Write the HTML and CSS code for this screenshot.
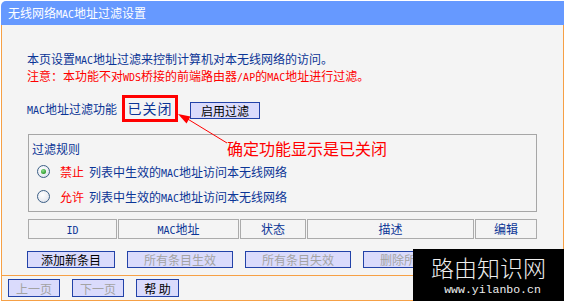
FILE: index.html
```html
<!DOCTYPE html>
<html lang="zh-CN">
<head>
  <meta charset="UTF-8" />
  <title>无线网络MAC地址过滤设置</title>
  <link rel="stylesheet" href="styles.css">
</head>
<body>
  <div class="page">
    <div class="title-bar">无线网络<span class="en">MAC</span>地址过滤设置</div>

    <div class="main">
      <p class="intro">本页设置<span class="en">MAC</span>地址过滤来控制计算机对本无线网络的访问。</p>
      <p class="note">注意：本功能不对<span class="en">WDS</span>桥接的前端路由器<span class="en">/AP</span>的<span class="en">MAC</span>地址进行过滤。</p>

      <div class="mac-row">
        <span class="label"><span class="en">MAC</span>地址过滤功能</span>
        <span class="state">已关闭</span>
        <button class="btn btn-enable">启用过滤</button>
      </div>

      <div class="rules">
        <div class="rules-title">过滤规则</div>
        <div class="rule">
          <span class="radio checked"></span>
          <span class="rule-key">禁止</span>
          <span class="rule-text">列表中生效的<span class="en">MAC</span>地址访问本无线网络</span>
        </div>
        <div class="rule">
          <span class="radio"></span>
          <span class="rule-key">允许</span>
          <span class="rule-text">列表中生效的<span class="en">MAC</span>地址访问本无线网络</span>
        </div>
      </div>

      <div class="list-head">
        <div class="cell c-id"><span class="en">ID</span></div>
        <div class="cell c-mac"><span class="en">MAC</span>地址</div>
        <div class="cell c-state">状态</div>
        <div class="cell c-desc">描述</div>
        <div class="cell c-edit">编辑</div>
      </div>

      <div class="actions">
        <button class="btn btn-add">添加新条目</button>
        <button class="btn btn-wide" disabled>所有条目生效</button>
        <button class="btn btn-wide" disabled>所有条目失效</button>
        <button class="btn btn-wide" disabled>删除所有条目</button>
      </div>
    </div>

    <div class="footer">
      <button class="btn btn-page" disabled>上一页</button>
      <button class="btn btn-page" disabled>下一页</button>
      <button class="btn btn-help">帮 助</button>
    </div>

    <!-- annotation drawn over the screenshot -->
    <svg class="arrow" width="70" height="45" viewBox="0 0 70 45">
      <line x1="16" y1="13" x2="57" y2="38" stroke="#ff0000" stroke-width="1" />
      <polygon points="8,9 20.5,11.5 16.5,18.5" fill="#ff0000" />
    </svg>
    <div class="callout">确定功能显示是已关闭</div>

    <div class="watermark">
      <div class="wm-name">路由知识网</div>
      <div class="wm-url">www.yilanbo.cn</div>
    </div>
  </div>
</body>
</html>
```

FILE: styles.css
```css
body {
  margin: 0;
  background: #fff;
  font-family: "Noto Sans CJK SC", sans-serif;
  font-size: 12px;
  color: #0b3596;
}
.en {
  font-family: "DejaVu Sans Mono", monospace;
  font-size: 10px;
  line-height: 10px;
}
.page {
  position: relative;
  width: 563px;
  margin: 1px 0 0 1px;
}
.title-bar {
  height: 24px;
  line-height: 24px;
  padding-left: 7px;
  background: #6699ff;
  color: #fff;
  border-top-left-radius: 5px;
}
.main {
  background: #f4f4f4;
  border-left: 1px solid #f6a045;
  border-right: 1px solid #f6a045;
  border-bottom: 1px solid #f6a045;
  padding: 25px 0 7px 25px;
}
.main p {
  margin: 0;
  height: 17px;
  line-height: 17px;
}
.note {
  color: #ff0000;
}
.mac-row {
  display: flex;
  align-items: center;
  height: 27px;
  margin-top: 11px;
}
.state {
  box-sizing: border-box;
  width: 56px;
  height: 27px;
  line-height: 21px;
  margin-left: 5px;
  border: 3px solid #ff0000;
  text-align: center;
  font-size: 14px;
  letter-spacing: 1px;
}
.btn {
  box-sizing: border-box;
  padding: 0;
  font-family: "Noto Sans CJK SC", sans-serif;
  font-size: 12px;
  color: #000;
  background: #dadbfc;
  border: 1px solid #2242a8;
  border-radius: 0;
  line-height: 15px;
}
.btn:disabled {
  color: #a3a3a3;
}
.btn-enable {
  width: 70px;
  height: 17px;
  margin: 3px 0 0 12px;
}
.rules {
  box-sizing: border-box;
  width: 509px;
  height: 78px;
  margin: 12px 0 0 1px;
  padding: 5px 3px 0;
  border: 1px solid #a6a6a6;
}
.rules-title {
  height: 17px;
  line-height: 17px;
}
.rules-title + .rule {
  margin-top: 2px;
}
.rule {
  display: flex;
  align-items: center;
  height: 25px;
}
.radio {
  box-sizing: border-box;
  width: 13px;
  height: 13px;
  margin: 0 10px 0 5px;
  border: 1px solid #3c5f86;
  border-radius: 50%;
  background: radial-gradient(circle at 40% 35%, #fff 0%, #e9ecf2 60%, #c9d0dc 100%);
  display: flex;
  align-items: center;
  justify-content: center;
}
.radio.checked::after {
  content: "";
  width: 5px;
  height: 5px;
  border-radius: 50%;
  background: radial-gradient(circle at 40% 35%, #8ee08e 0%, #2c9a2c 70%);
}
.rule-key {
  color: #ff0000;
  margin-right: 5px;
}
.list-head {
  display: flex;
  gap: 1px;
  margin: 7px 0 0 1px;
}
.cell {
  box-sizing: border-box;
  height: 20px;
  line-height: 18px;
  border: 1px solid #ababab;
  text-align: center;
}
.c-id { width: 89px; }
.c-mac { width: 121px; }
.c-state { width: 66px; }
.c-desc { width: 167px; }
.c-edit { width: 62px; }
.actions {
  display: flex;
  gap: 12px;
  margin-top: 12px;
}
.actions .btn {
  height: 17px;
}
.btn-add { width: 88px; }
.btn-wide { width: 106px; }
.footer {
  display: flex;
  gap: 12px;
  padding: 3px 0 3px 6px;
  background: #f4f4f4;
  border-left: 1px solid #f6a045;
  border-right: 1px solid #f6a045;
  border-bottom: 1px solid #f6a045;
}
.footer .btn {
  height: 18px;
}
.btn-page { width: 52px; }
.btn-help { width: 43px; }
.arrow {
  position: absolute;
  left: 169px;
  top: 104px;
}
.callout {
  position: absolute;
  left: 226px;
  top: 139px;
  font-size: 16px;
  line-height: 16px;
  color: #ff0000;
}
.watermark {
  position: absolute;
  right: 0;
  top: 248px;
  width: 151px;
  height: 56px;
  background: #000;
  color: #eee;
  text-align: center;
}
.wm-name {
  margin-top: 7px;
  font-size: 23px;
  line-height: 22px;
  font-weight: 300;
}
.wm-url {
  font-family: "Liberation Mono", monospace;
  font-size: 11.5px;
  line-height: 14px;
  margin: 5px 0 0 8px;
}
```
